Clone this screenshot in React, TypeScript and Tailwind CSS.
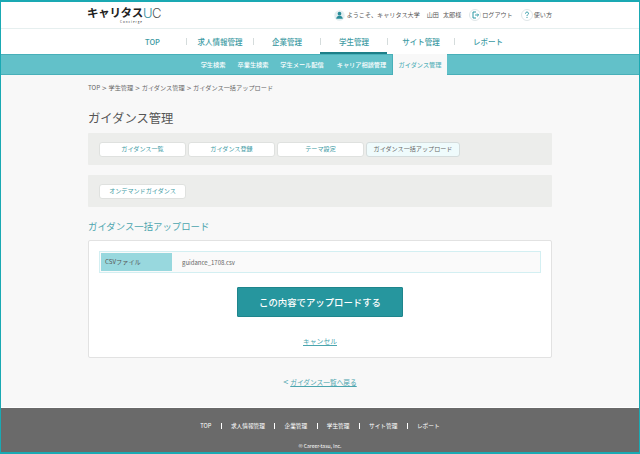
const font = { fontFamily: '"Noto Sans CJK JP", "Noto Sans", sans-serif' };

const mainNav = ["TOP", "求人情報管理", "企業管理", "学生管理", "サイト管理", "レポート"];
const subNav: [string, string][] = [
  ["学生検索", "w-[40px]"],
  ["卒業生検索", "w-[40px]"],
  ["学生メール配信", "w-[58px]"],
  ["キャリア相談管理", "w-[61px]"],
];
const tabs = ["ガイダンス一覧", "ガイダンス登録", "テーマ設定"];
const footer = ["TOP", "求人情報管理", "企業管理", "学生管理", "サイト管理", "レポート"];

function Tab({ label }: { label: string }) {
  return (
    <a className="flex h-[15px] w-[87px] items-center justify-center rounded-[3px] border border-[#dfe1df] bg-white text-[6.1px] text-[#3c9aa3]">
      {label}
    </a>
  );
}

export default function App() {
  return (
    <div
      style={font}
      className="flex h-[454px] w-[640px] flex-col overflow-hidden border-x border-t-2 border-b-2 border-x-[#1aa9b3] border-y-[#1aa9b3] bg-[#f8f8f8] text-[#555]"
    >
      <header className="flex h-[27px] shrink-0 items-center justify-between border-b border-[#e6efef] bg-white pl-[86px] pr-[87px]">
        <div className="flex flex-col items-start leading-none">
          <div className="flex h-[13px] items-center">
            <span className="text-[11.5px] font-bold tracking-[-0.3px] text-[#222]">キャリタス</span>
            <span className="text-[13px] tracking-[-0.5px]" style={{ fontFamily: '"Inter", sans-serif', fontWeight: 300 }}>
              <span className="text-[#2f8ea0]">U</span><span className="text-[#555]">C</span>
            </span>
          </div>
          <span className="ml-[33px] mt-[1px] text-[3px] tracking-[1px] text-[#333]">Concierge</span>
        </div>
        <div className="flex items-center text-[6.1px] text-[#555]">
          <svg width="11" height="11" viewBox="0 0 12 12" className="mr-[2px]">
            <circle cx="6" cy="6" r="5.7" fill="#e4eef0" />
            <circle cx="6" cy="4" r="2" fill="#2a8c99" />
            <path d="M2.4 9.6c.2-2.3 1.6-3.4 3.6-3.4s3.4 1.1 3.6 3.4z" fill="#2a8c99" />
          </svg>
          <span>ようこそ、キャリタス大学</span>
          <span className="ml-[7px]">山田</span>
          <span className="ml-[4px]">太郎様</span>
          <svg width="12" height="12" viewBox="0 0 12 12" className="ml-[8px] mr-[1px]">
            <circle cx="6" cy="6" r="5.5" fill="#fff" stroke="#dfe6e8" />
            <path d="M7 3H4v6h3" fill="none" stroke="#2a97a3" strokeWidth="1" />
            <path d="M6 6h3.6M8.2 4.6 9.6 6 8.2 7.4" fill="none" stroke="#2a97a3" strokeWidth="0.9" />
          </svg>
          <span>ログアウト</span>
          <svg width="12" height="12" viewBox="0 0 12 12" className="ml-[8px] mr-[1px]">
            <circle cx="6" cy="6" r="5.5" fill="#fff" stroke="#dfe6e8" />
            <path d="M4.5 4.6c0-1 .7-1.5 1.5-1.5s1.5.5 1.5 1.3c0 1.2-1.5 1.2-1.5 2.5" fill="none" stroke="#2a97a3" strokeWidth="1" />
            <rect x="5.5" y="7.9" width="1" height="1" fill="#2a97a3" />
          </svg>
          <span>使い方</span>
        </div>
      </header>

      <nav className="flex h-[25px] shrink-0 justify-center bg-white">
        {mainNav.map((item, i) => (
          <div key={item} className="relative flex h-full w-[67px] items-center justify-center">
            {i > 0 && <span className="h-[7px] w-px bg-[#d5dcdc]" />}
            <a className="flex-1 text-center text-[7.5px] font-medium text-[#3c9aa3]">{item}</a>
            {i === 3 && <span className="absolute bottom-0 left-0 right-0 h-[2px] bg-[#1d7f88]" />}
          </div>
        ))}
      </nav>

      <nav className="flex h-[21px] shrink-0 justify-center border-y border-y-[#48b0b9] bg-[#62c1c9] text-[6.2px] font-medium text-white">
        <div className="flex w-[254px]">
          {subNav.map(([label, w]) => (
            <a key={label} className={`flex items-center justify-center ${w}`}>{label}</a>
          ))}
          <a className="flex -mt-px h-[21px] w-[55px] items-center justify-center border-l border-[#48b0b9] bg-[#f8f8f8] text-[#5fb5bd]">ガイダンス管理</a>
        </div>
      </nav>

      <main className="flex flex-1 flex-col px-[87px]">
        <div className="mt-[8px] flex h-[10px] items-center gap-[2px] text-[6.2px] text-[#666]">
          <span>TOP</span><span className="text-[8px]">&gt;</span>
          <span>学生管理</span><span className="text-[8px]">&gt;</span>
          <span>ガイダンス管理</span><span className="text-[8px]">&gt;</span>
          <span>ガイダンス一括アップロード</span>
        </div>

        <h1 className="mt-[15px] text-[12.3px] leading-[20px] text-[#555]">ガイダンス管理</h1>

        <div className="mt-[5px] flex h-[32px] items-center gap-[2px] rounded-[1px] bg-[#ecedeb] pl-[11px]">
          {tabs.map((t) => <Tab key={t} label={t} />)}
          <a className="flex h-[15px] w-[94px] items-center justify-center rounded-[3px] border border-[#d5dcdc] bg-[#effbfc] text-[6.1px] text-[#666]">
            ガイダンス一括アップロード
          </a>
        </div>

        <div className="mt-[10px] flex h-[32px] items-center rounded-[1px] bg-[#ecedeb] pl-[11px]">
          <Tab label="オンデマンドガイダンス" />
        </div>

        <h2 className="mt-[11px] text-[9.4px] leading-[16px] text-[#4ba5ae]">ガイダンス一括アップロード</h2>

        <section className="mt-[6px] flex h-[118px] flex-col items-center rounded-[2px] border border-[#e2e2e2] bg-white px-[10px] pt-[10px]">
          <div className="flex h-[22px] w-full border border-[#d3eff2] bg-[#fafafa] p-[1px]">
            <div className="flex w-[71px] items-center bg-[#98d8de] pl-[4px] text-[6.2px] text-[#555]">CSVファイル</div>
            <div className="flex items-center pl-[10px] text-[6px] text-[#666]">guidance_1708.csv</div>
          </div>
          <button className="mt-[14px] h-[30px] w-[166px] rounded-[1px] border border-[#1e858c] bg-[#26969e] text-[9.4px] font-medium text-white">
            この内容でアップロードする
          </button>
          <a className="mt-[19px] text-[6.8px] text-[#4ba5ae] underline">キャンセル</a>
        </section>

        <div className="mt-[17px] flex items-center justify-center gap-[2px] text-[6.7px] text-[#4ba5ae]">
          <span className="text-[9px]">&lt;</span>
          <a className="underline">ガイダンス一覧へ戻る</a>
        </div>
      </main>

      <footer className="flex h-[45px] shrink-0 flex-col items-center border-t border-white bg-[#6a6a6a] text-[5.7px] text-white">
        <div className="mt-[14px] flex items-center">
          {footer.map((f, i) => (
            <div key={f} className="flex items-center">
              {i > 0 && <span className="mx-[9.25px] h-[6px] w-px bg-white" />}
              <span>{f}</span>
            </div>
          ))}
        </div>
        <div className="mt-[11px] text-[5px]">© Career-tasu, Inc.</div>
      </footer>
    </div>
  );
}
